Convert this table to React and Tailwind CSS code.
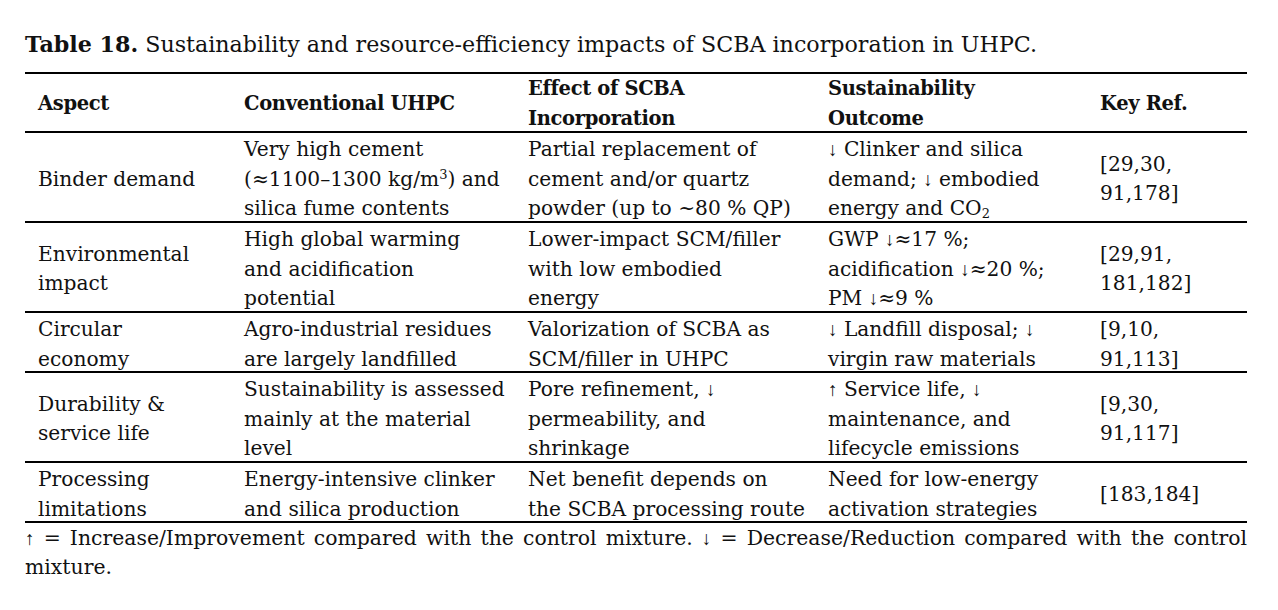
const Dn = () => <span className="inline-block leading-none font-['Liberation_Serif',serif] text-[19px]">↓</span>;
const Up = () => <span className="inline-block leading-none font-['Liberation_Serif',serif] text-[19px]">↑</span>;

const ROWS = [
  {
    h: "h-[90px]",
    aspect: ["Binder demand"],
    conv: [
      "Very high cement",
      <>(≈1100–1300 kg/m<sup className="text-[13px]">3</sup>) and</>,
      "silica fume contents",
    ],
    effect: ["Partial replacement of", "cement and/or quartz", "powder (up to ~80 % QP)"],
    outcome: [
      <><Dn /> Clinker and silica</>,
      <>demand; <Dn /> embodied</>,
      <>energy and CO<sub className="text-[13px]">2</sub></>,
    ],
    ref: ["[29,30,", "91,178]"],
  },
  {
    h: "h-[90px]",
    aspect: ["Environmental", "impact"],
    conv: ["High global warming", "and acidification", "potential"],
    effect: ["Lower-impact SCM/filler", "with low embodied", "energy"],
    outcome: [
      <>GWP <Dn />≈17 %;</>,
      <>acidification <Dn />≈20 %;</>,
      <>PM <Dn />≈9 %</>,
    ],
    ref: ["[29,91,", "181,182]"],
  },
  {
    h: "h-[60px]",
    aspect: ["Circular", "economy"],
    conv: ["Agro-industrial residues", "are largely landfilled"],
    effect: ["Valorization of SCBA as", "SCM/filler in UHPC"],
    outcome: [<><Dn /> Landfill disposal; <Dn /></>, "virgin raw materials"],
    ref: ["[9,10,", "91,113]"],
  },
  {
    h: "h-[90px]",
    aspect: ["Durability &", "service life"],
    conv: ["Sustainability is assessed", "mainly at the material", "level"],
    effect: [<>Pore refinement, <Dn /></>, "permeability, and", "shrinkage"],
    outcome: [<><Up /> Service life, <Dn /></>, "maintenance, and", "lifecycle emissions"],
    ref: ["[9,30,", "91,117]"],
  },
  {
    h: "h-[60px]",
    aspect: ["Processing", "limitations"],
    conv: ["Energy-intensive clinker", "and silica production"],
    effect: ["Net benefit depends on", "the SCBA processing route"],
    outcome: ["Need for low-energy", "activation strategies"],
    ref: ["[183,184]"],
  },
];

function Lines({ items }) {
  return (
    <div className="flex flex-col">
      {items.map((t, i) => (
        <span key={i} className="whitespace-nowrap">
          {t}
        </span>
      ))}
    </div>
  );
}

export default function App() {
  return (
    <div className="w-[1278px] h-[610px] bg-white text-[#111] font-['DejaVu_Serif',serif] overflow-hidden">
      <div className="pl-[25px] pr-[31px] pt-[29px]">
        <p className="text-[22.2px] leading-[30px] whitespace-nowrap">
          <span className="font-bold">Table 18.</span> Sustainability and resource-efficiency impacts of SCBA incorporation in UHPC.
        </p>

        <div className="mt-[13px] border-t-2 border-black text-[20.2px] leading-[29.5px]">
          <div className="grid grid-cols-[206px_284px_300px_272px_160px] h-[59px] items-center border-b-2 border-black font-bold text-[19.5px] tracking-[-0.35px]">
            <div className="pl-[13px]">Aspect</div>
            <div className="pl-[13px]">Conventional UHPC</div>
            <div className="pl-[13px]">
              <Lines items={["Effect of SCBA", "Incorporation"]} />
            </div>
            <div className="pl-[13px]">
              <Lines items={["Sustainability", "Outcome"]} />
            </div>
            <div className="pl-[13px]">Key Ref.</div>
          </div>

          {ROWS.map((r, i) => (
            <div
              key={i}
              className={`grid grid-cols-[206px_284px_300px_272px_160px] ${r.h} items-center border-b-2 border-black pt-[2px]`}
            >
              <div className="pl-[13px]">
                <Lines items={r.aspect} />
              </div>
              <div className="pl-[13px]">
                <Lines items={r.conv} />
              </div>
              <div className="pl-[13px]">
                <Lines items={r.effect} />
              </div>
              <div className="pl-[13px]">
                <Lines items={r.outcome} />
              </div>
              <div className="pl-[13px]">
                <Lines items={r.ref} />
              </div>
            </div>
          ))}
        </div>

        {/* footnote: justified, wraps after "control" */}
        <p className="text-[20.4px] leading-[29px] text-justify pt-[1px]">
          <Up /> = Increase/Improvement compared with the control mixture. <Dn /> = Decrease/Reduction compared with the control{" "}
          <span>mixture.</span>
        </p>
      </div>
    </div>
  );
}
